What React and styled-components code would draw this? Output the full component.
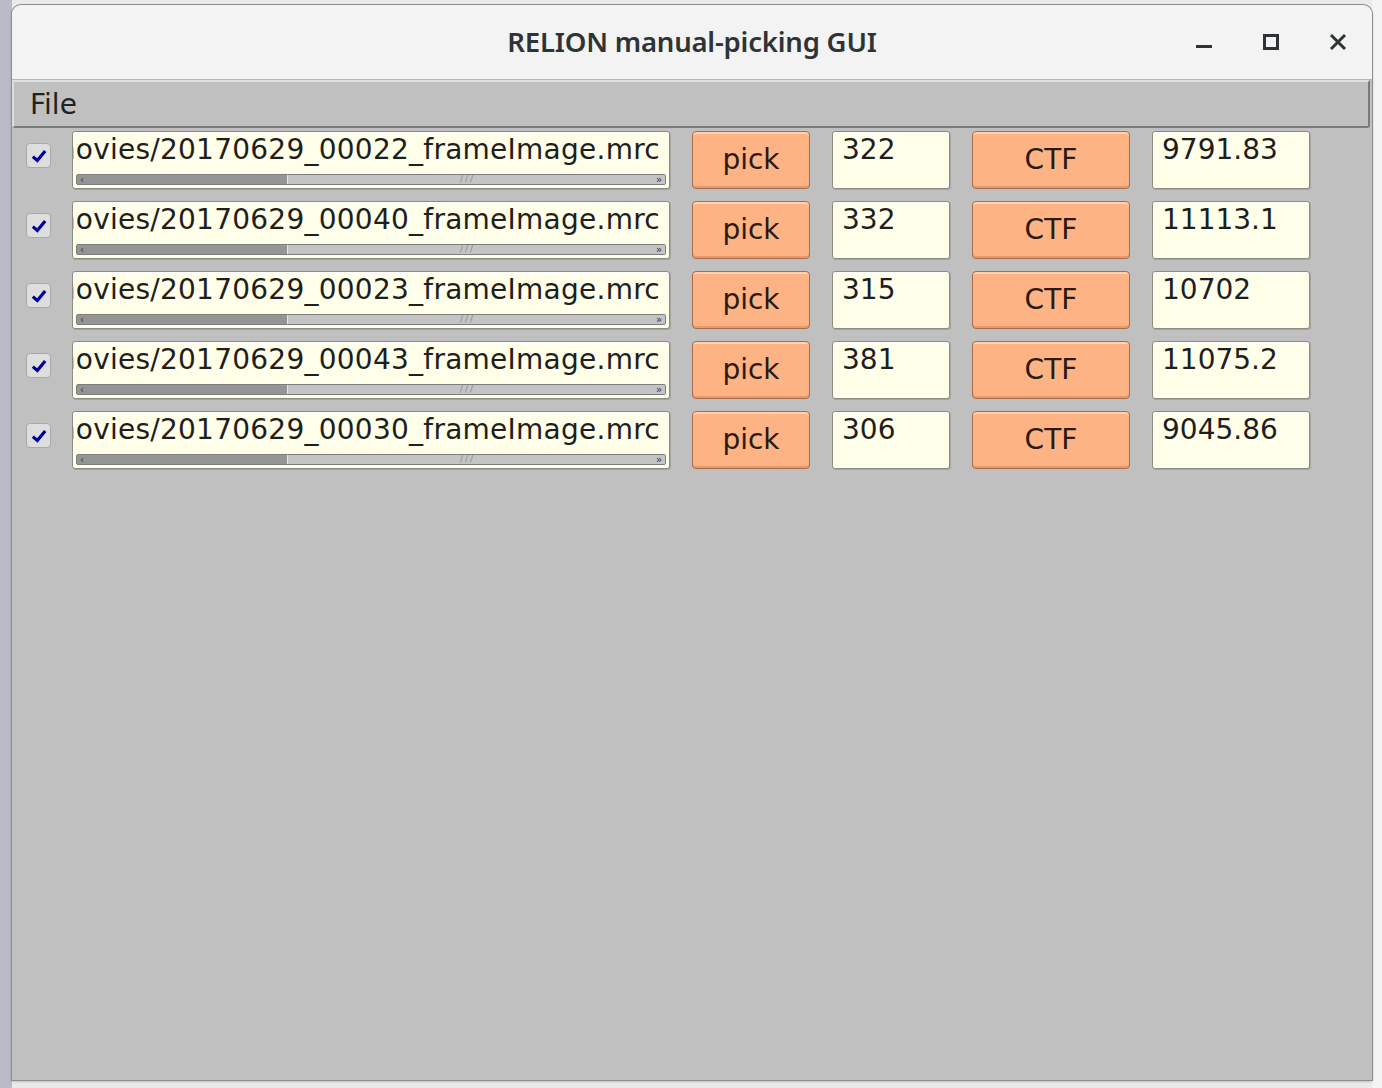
import React from "react";
import styled, { createGlobalStyle } from "styled-components";

const GlobalStyle = createGlobalStyle`
  html, body {
    margin: 0;
    padding: 0;
    background: #dcdcdc;
    font-family: "DejaVu Sans", "Liberation Sans", sans-serif;
  }
`;

const micrographs = [
  { file: "movies/20170629_00022_frameImage.mrc", picks: "322", defocus: "9791.83" },
  { file: "movies/20170629_00040_frameImage.mrc", picks: "332", defocus: "11113.1" },
  { file: "movies/20170629_00023_frameImage.mrc", picks: "315", defocus: "10702" },
  { file: "movies/20170629_00043_frameImage.mrc", picks: "381", defocus: "11075.2" },
  { file: "movies/20170629_00030_frameImage.mrc", picks: "306", defocus: "9045.86" },
];

export default function App() {
  return (
    <Desktop>
      <GlobalStyle />
      <Window>
        <TitleBar>
          <Title>RELION manual-picking GUI</Title>
          <Controls>
            <ControlButton aria-label="minimize">
              <svg width="20" height="20" viewBox="0 0 20 20">
                <rect x="2" y="13" width="16" height="3" fill="#2e3436" />
              </svg>
            </ControlButton>
            <ControlButton aria-label="maximize">
              <svg width="20" height="20" viewBox="0 0 20 20">
                <rect x="3.5" y="3.5" width="13" height="13" fill="none" stroke="#2e3436" strokeWidth="3" />
              </svg>
            </ControlButton>
            <ControlButton aria-label="close">
              <svg width="20" height="20" viewBox="0 0 20 20">
                <path d="M3 3 L17 17 M17 3 L3 17" stroke="#2e3436" strokeWidth="3" />
              </svg>
            </ControlButton>
          </Controls>
        </TitleBar>
        <MenuBar>
          <MenuItem>File</MenuItem>
        </MenuBar>
        <Content>
          {micrographs.map((m) => (
            <Row key={m.file}>
              <Check>
                <svg width="18" height="18" viewBox="0 0 16 16">
                  <path d="M2.5 8.5 L6.5 12 L13.5 3.5" fill="none" stroke="#00009c" strokeWidth="2.8" />
                </svg>
              </Check>
              <FileField>
                <FileText>
                  <span>{m.file}</span>
                </FileText>
                <ScrollBar>
                  <Thumb>
                    <Arrow>‹</Arrow>
                  </Thumb>
                  <Track>
                    <Grip>///</Grip>
                    <Arrow>»</Arrow>
                  </Track>
                </ScrollBar>
              </FileField>
              <ActionButton>pick</ActionButton>
              <ValueField>{m.picks}</ValueField>
              <ActionButton>CTF</ActionButton>
              <ValueField>{m.defocus}</ValueField>
            </Row>
          ))}
        </Content>
      </Window>
    </Desktop>
  );
}

const Desktop = styled.div`
  width: 1382px;
  height: 1088px;
  box-sizing: border-box;
  padding: 5px 10px 8px 12px;
  background: linear-gradient(to right, #b9bcc6 0, #b9bcc6 12px, #eaeaea 12px, #eaeaea 1372px, #f4f4f4 1372px);
  overflow: hidden;
`;

const Window = styled.div`
  display: flex;
  flex-direction: column;
  height: 100%;
  background: #c0c0c0;
  border-radius: 9px 9px 0 0;
  box-shadow: 0 0 0 1px #8e8e8e, 0 1px 3px rgba(0, 0, 0, 0.35);
  overflow: hidden;
`;

const TitleBar = styled.div`
  position: relative;
  display: flex;
  align-items: center;
  justify-content: center;
  height: 74px;
  background: #f3f3f3;
  border-bottom: 1px solid #b6b6b6;
`;

const Title = styled.div`
  font-family: "Noto Sans", "DejaVu Sans", sans-serif;
  font-weight: 600;
  font-size: 27.5px;
  color: #2e3436;
  letter-spacing: -0.2px;
  padding-bottom: 2px;
`;

const Controls = styled.div`
  position: absolute;
  right: 24px;
  top: 27px;
  display: flex;
  gap: 47px;
`;

const ControlButton = styled.div`
  width: 20px;
  height: 20px;
  display: flex;
`;

const MenuBar = styled.div`
  display: flex;
  align-items: center;
  height: 44px;
  margin: 0 2px 0 0;
  padding: 0 16px;
  background: #c0c0c0;
  border-top: 2px solid #dedede;
  border-left: 2px solid #dedede;
  border-right: 2px solid #7a7a7a;
  border-bottom: 2px solid #7a7a7a;
  border-radius: 0 0 3px 3px;
`;

const MenuItem = styled.div`
  font-size: 28px;
  color: #222;
`;

const Content = styled.div`
  flex: 1;
  display: flex;
  flex-direction: column;
  gap: 12px;
  padding: 3px 0 0 14px;
`;

const Row = styled.div`
  display: grid;
  grid-template-columns: 24px 598px 118px 118px 158px 158px;
  column-gap: 22px;
  height: 58px;
`;

const Check = styled.div`
  width: 25px;
  height: 25px;
  margin-top: 12px;
  box-sizing: border-box;
  display: flex;
  align-items: center;
  justify-content: center;
  background: #dedede;
  border: 1px solid #a9a9a9;
  border-radius: 4px;
`;

const Field = styled.div`
  box-sizing: border-box;
  height: 58px;
  background: #fefee9;
  border: 1px solid #8c8c82;
  border-radius: 3px;
  box-shadow: inset 1px 1px 0 #ffffff, 1px 1px 0 #a4a4a4;
`;

const FileField = styled(Field)`
  display: flex;
  flex-direction: column;
  overflow: hidden;
`;

const FileText = styled.div`
  flex: 1;
  display: flex;
  justify-content: flex-end;
  overflow: hidden;
  padding: 2px 9px 0 0;
  font-size: 28px;
  letter-spacing: 0.25px;
  line-height: 32px;
  color: #1e1e1e;
  white-space: nowrap;
`;

const ScrollBar = styled.div`
  display: flex;
  height: 9px;
  margin: 0 3px 3px 3px;
  border: 1px solid #7e7e7e;
  border-radius: 2px;
  background: #c8c8c8;
`;

const Thumb = styled.div`
  width: 210px;
  display: flex;
  align-items: center;
  background: #959595;
`;

const Track = styled.div`
  flex: 1;
  position: relative;
  display: flex;
  align-items: center;
  justify-content: flex-end;
  background: #c4c4c4;
  border-left: 1px solid #e6e6e6;
`;

const Arrow = styled.span`
  font-size: 10px;
  line-height: 9px;
  color: #333;
  padding: 0 3px;
`;

const Grip = styled.span`
  position: absolute;
  left: 172px;
  top: 0;
  font-size: 9px;
  line-height: 9px;
  letter-spacing: 2px;
  color: #8a8a8a;
`;

const ValueField = styled(Field)`
  padding: 2px 0 0 9px;
  font-size: 28px;
  line-height: 32px;
  color: #1e1e1e;
`;

const ActionButton = styled.div`
  box-sizing: border-box;
  height: 58px;
  display: flex;
  align-items: center;
  justify-content: center;
  padding-bottom: 1px;
  background: #fdb383;
  border: 1px solid #a86c48;
  border-radius: 4px;
  box-shadow: inset 0 2px 0 #ffd2b4, inset 0 -2px 0 #e89a6a;
  font-size: 28px;
  color: #2a1a10;
`;
